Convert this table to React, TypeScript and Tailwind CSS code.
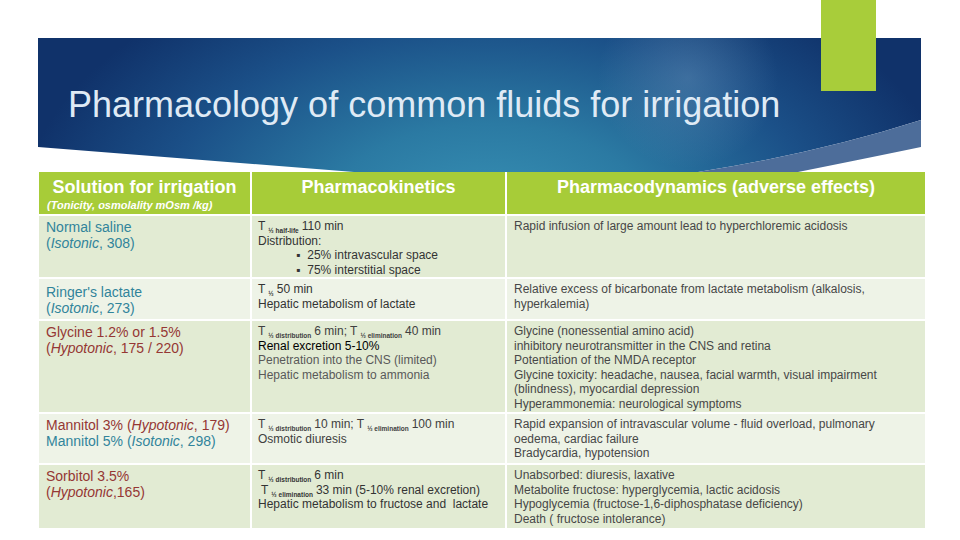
import type { ReactElement, ReactNode } from 'react'

const BLUE = 'text-[#31849b]'
const RED = 'text-[#953734]'

function Sub({ children }: { children: ReactNode }): ReactElement {
  return <span className="relative top-[3px] mx-[3px] text-[6.5px] font-bold leading-none">{children}</span>
}

function Banner(): ReactElement {
  return (
    <div className="relative h-[134px] w-[883px]">
      <svg className="absolute inset-0" width="883" height="134" viewBox="0 0 883 134">
        <defs>
          <radialGradient
            id="bannerFill"
            gradientUnits="userSpaceOnUse"
            cx="450"
            cy="185"
            r="470"
            gradientTransform="translate(450 185) scale(1 0.6) translate(-450 -185)"
          >
            <stop offset="0" stopColor="#3993b6" />
            <stop offset="0.35" stopColor="#2b7aa3" />
            <stop offset="0.7" stopColor="#1b5088" />
            <stop offset="1" stopColor="#10326a" />
          </radialGradient>
          <radialGradient id="bannerGlow" gradientUnits="userSpaceOnUse" cx="650" cy="40" r="90">
            <stop offset="0" stopColor="#7aa0c4" stopOpacity="0.35" />
            <stop offset="1" stopColor="#7aa0c4" stopOpacity="0" />
          </radialGradient>
        </defs>
        <path d="M0 0 H883 V82 Q780 115 660 134 L316 134 L0 109 Z" fill="url(#bannerFill)" />
        <path d="M0 0 H883 V82 Q780 115 660 134 L316 134 L0 109 Z" fill="url(#bannerGlow)" />
        <path d="M883 82 Q780 115 660 134 L760 134 Q830 120 883 109 Z" fill="#4d6d9a" />
      </svg>
      <h1 className="relative pl-[30px] pt-[49px] text-[36px] font-normal leading-none text-[#dfeaf5]">
        Pharmacology of common fluids for irrigation
      </h1>
    </div>
  )
}

export default function App(): ReactElement {
  const dark = 'bg-[#e2ebd3]'
  const light = 'bg-[#eef3e7]'
  const c1 = 'px-[7px] pt-[3px] text-[14px] leading-[16px]'
  const c2 = 'px-[6px] pt-[3px] text-[12px] leading-[14.5px] text-[#333333]'
  const c3 = 'px-[7px] pt-[3px] text-[12px] leading-[14.5px] text-[#474747]'

  return (
    <div
      className="relative h-[540px] w-[960px] overflow-hidden bg-white pl-[38px] pt-[38px]"
      style={{ fontFamily: '"Liberation Sans", Arial, sans-serif' }}
    >
      <Banner />
      <div className="absolute left-[821px] top-0 h-[91px] w-[55px] bg-[#a8cd3a]" />

      <div className="ml-[1px] grid w-[886px] grid-cols-[211px_253px_418px] grid-rows-[42px_61px_40px_91px_49px_63px] gap-x-[2px] gap-y-[2px]">
        {/* header */}
        <div className="bg-[#a7cc38] pt-[5px] text-white">
          <div className="text-center text-[18px] font-bold leading-[20px]">Solution for irrigation</div>
          <div className="mt-[2px] pl-[8px] text-[11px] font-bold italic leading-[12px]">
            (Tonicity, osmolality mOsm /kg)
          </div>
        </div>
        <div className="bg-[#a7cc38] pt-[5px] text-center text-[18px] font-bold leading-[20px] text-white">
          Pharmacokinetics
        </div>
        <div className="bg-[#a7cc38] pt-[5px] text-center text-[18px] font-bold leading-[20px] text-white">
          Pharmacodynamics (adverse effects)
        </div>

        {/* normal saline */}
        <div className={`${dark} ${c1} ${BLUE}`}>
          <div>Normal saline</div>
          <div>
            (<i>Isotonic</i>, 308)
          </div>
        </div>
        <div className={`${dark} ${c2}`}>
          <div>
            T<Sub>½ half-life</Sub>110 min
          </div>
          <div>Distribution:</div>
          <ul className="pl-[38px]">
            <li className="flex gap-[7px]">
              <span>▪</span>25% intravascular space
            </li>
            <li className="flex gap-[7px]">
              <span>▪</span>75% interstitial space
            </li>
          </ul>
        </div>
        <div className={`${dark} ${c3}`}>Rapid infusion of large amount lead to hyperchloremic acidosis</div>

        {/* ringer's */}
        <div className={`${light} ${c1} ${BLUE}`}>
          <div className="pt-[2px]">Ringer's lactate</div>
          <div>
            (<i>Isotonic</i>, 273)
          </div>
        </div>
        <div className={`${light} ${c2}`}>
          <div>
            T<Sub>½</Sub>50 min
          </div>
          <div>Hepatic metabolism of lactate</div>
        </div>
        <div className={`${light} ${c3}`}>
          <div>Relative excess of bicarbonate from lactate metabolism (alkalosis,</div>
          <div>hyperkalemia)</div>
        </div>

        {/* glycine */}
        <div className={`${dark} ${c1} ${RED}`}>
          <div>Glycine 1.2% or 1.5%</div>
          <div>
            (<i>Hypotonic</i>, 175 / 220)
          </div>
        </div>
        <div className={`${dark} ${c2} text-[#404040]`}>
          <div>
            T<Sub>½ distribution</Sub>6 min; T<Sub>½ elimination</Sub>40 min
          </div>
          <div className="text-black">Renal excretion 5-10%</div>
          <div className="text-[#595959]">Penetration into the CNS (limited)</div>
          <div className="text-[#595959]">Hepatic metabolism to ammonia</div>
        </div>
        <div className={`${dark} ${c3}`}>
          <div>Glycine (nonessential amino acid)</div>
          <div>inhibitory neurotransmitter in the CNS and retina</div>
          <div>Potentiation of the NMDA receptor</div>
          <div>Glycine toxicity: headache, nausea, facial warmth, visual impairment</div>
          <div>(blindness), myocardial depression</div>
          <div>Hyperammonemia: neurological symptoms</div>
        </div>

        {/* mannitol */}
        <div className={`${light} ${c1}`}>
          <div className={RED}>
            Mannitol 3% (<i>Hypotonic</i>, 179)
          </div>
          <div className={BLUE}>
            Mannitol 5% (<i>Isotonic</i>, 298)
          </div>
        </div>
        <div className={`${light} ${c2} text-[#404040]`}>
          <div>
            T<Sub>½ distribution</Sub>10 min; T<Sub>½ elimination</Sub>100 min
          </div>
          <div>Osmotic diuresis</div>
        </div>
        <div className={`${light} ${c3}`}>
          <div>Rapid expansion of intravascular volume - fluid overload, pulmonary</div>
          <div>oedema, cardiac failure</div>
          <div>Bradycardia, hypotension</div>
        </div>

        {/* sorbitol */}
        <div className={`${dark} ${c1} ${RED}`}>
          <div>Sorbitol 3.5%</div>
          <div>
            (<i>Hypotonic</i>,165)
          </div>
        </div>
        <div className={`${dark} ${c2}`}>
          <div>
            T<Sub>½ distribution</Sub>6 min
          </div>
          <div className="pl-[3px]">
            T<Sub>½ elimination</Sub>33 min (5-10% renal excretion)
          </div>
          <div>Hepatic metabolism to fructose and&nbsp; lactate</div>
        </div>
        <div className={`${dark} ${c3}`}>
          <div>Unabsorbed: diuresis, laxative</div>
          <div>Metabolite fructose: hyperglycemia, lactic acidosis</div>
          <div>Hypoglycemia (fructose-1,6-diphosphatase deficiency)</div>
          <div>Death ( fructose intolerance)</div>
        </div>
      </div>
    </div>
  )
}
